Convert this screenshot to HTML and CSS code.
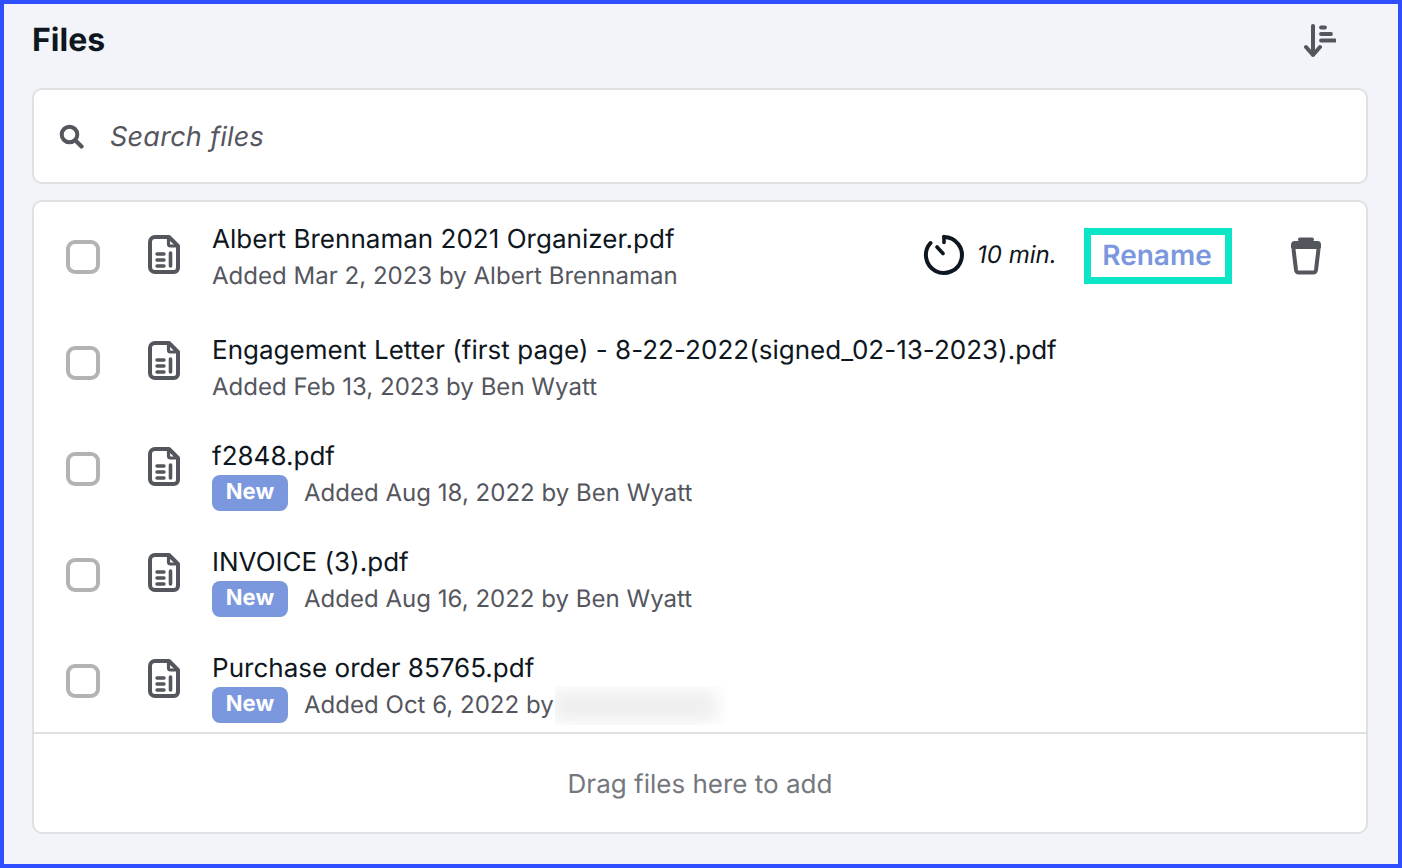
FILE: index.html
```html
<!DOCTYPE html>
<html lang="en">
<head>
<meta charset="utf-8">
<title>Files</title>
<link rel="stylesheet" href="styles.css">
</head>
<body>
<svg class="defs" width="0" height="0" aria-hidden="true">
  <symbol id="file" viewBox="0 0 32 39">
    <path d="M7 2h14l9 9v22a4 4 0 0 1-4 4H7a5 5 0 0 1-5-5V7a5 5 0 0 1 5-5z" fill="none" stroke="#54565e" stroke-width="4" stroke-linejoin="round"/>
    <path d="M20.500 2v7a2 2 0 0 0 2 2H30" fill="none" stroke="#54565e" stroke-width="3.200"/>
    <path d="M9 19h7M9 25h7M9 31h7" stroke="#54565e" stroke-width="3.4" stroke-linecap="round"/>
    <path d="M22.500 18v13" stroke="#54565e" stroke-width="3.600" stroke-linecap="round"/>
  </symbol>
</svg>
<main class="panel">
  <header class="head">
    <h1 class="title">Files</h1>
    <svg class="sort" width="32" height="34" viewBox="0 0 32 34" aria-label="Sort">
      <path d="M9 2v29M2 23l7 8 7-8" fill="none" stroke="#54565e" stroke-width="4" stroke-linecap="round" stroke-linejoin="round"/>
      <path d="M18 3.500h4M18 10h10M18 16.500h14" fill="none" stroke="#54565e" stroke-width="3.800" stroke-linecap="round" transform="translate(-1 0)"/>
    </svg>
  </header>
  <div class="search">
    <svg class="search-icon" width="25" height="25" viewBox="0 0 25 25" aria-hidden="true">
      <circle cx="10.500" cy="10.500" r="7.800" fill="none" stroke="#54565e" stroke-width="4"/>
      <path d="M16.500 16.500l6 6" stroke="#54565e" stroke-width="4.200" stroke-linecap="round"/>
    </svg>
    <span class="search-text">Search files</span>
  </div>
  <section class="files">
    <div class="list">
      <div class="row">
        <span class="check"></span>
        <svg class="file-icon"><use href="#file"/></svg>
        <div class="info info-top">
          <div class="name">Albert Brennaman 2021 Organizer.pdf</div>
          <div class="meta">Added Mar 2, 2023 by Albert Brennaman</div>
        </div>
        <svg class="timer" width="42" height="42" viewBox="0 0 42 42" aria-hidden="true">
          <path d="M21 3a18 18 0 1 1-13.500 6" fill="none" stroke="#0e1620" stroke-width="4" stroke-linecap="round"/>
          <path d="M21 2.500v6M14 13l6 6.500" fill="none" stroke="#0e1620" stroke-width="3.600" stroke-linecap="round"/>
        </svg>
        <span class="time">10 min.</span>
        <span class="rename">Rename</span>
        <svg class="trash" width="34" height="38" viewBox="0 0 34 38" aria-label="Delete">
          <path d="M4.500 12l2.500 21a3 3 0 0 0 3 2.500h14a3 3 0 0 0 3-2.500l2.500-21" fill="none" stroke="#54565e" stroke-width="4" stroke-linejoin="round"/>
          <path d="M3.500 10.500v-3a2 2 0 0 1 2-2h23a2 2 0 0 1 2 2v3z" fill="#54565e" stroke="#54565e" stroke-width="3" stroke-linejoin="round"/>
          <path d="M11 2.500h12" stroke="#54565e" stroke-width="4" stroke-linecap="round"/>
        </svg>
      </div>
      <div class="row">
        <span class="check"></span>
        <svg class="file-icon"><use href="#file"/></svg>
        <div class="info">
          <div class="name">Engagement Letter (first page) - 8-22-2022(signed_02-13-2023).pdf</div>
          <div class="meta">Added Feb 13, 2023 by Ben Wyatt</div>
        </div>
      </div>
      <div class="row">
        <span class="check"></span>
        <svg class="file-icon"><use href="#file"/></svg>
        <div class="info">
          <div class="name">f2848.pdf</div>
          <div class="meta"><span class="badge">New</span>Added Aug 18, 2022 by Ben Wyatt</div>
        </div>
      </div>
      <div class="row">
        <span class="check"></span>
        <svg class="file-icon"><use href="#file"/></svg>
        <div class="info">
          <div class="name">INVOICE (3).pdf</div>
          <div class="meta"><span class="badge">New</span>Added Aug 16, 2022 by Ben Wyatt</div>
        </div>
      </div>
      <div class="row">
        <span class="check"></span>
        <svg class="file-icon"><use href="#file"/></svg>
        <div class="info">
          <div class="name">Purchase order 85765.pdf</div>
          <div class="meta"><span class="badge">New</span>Added Oct 6, 2022 by<span class="redact"><span class="redact-fill"></span></span></div>
        </div>
      </div>
    </div>
    <footer class="drop">Drag files here to add</footer>
  </section>
</main>
</body>
</html>
```

FILE: styles.css
```css
* { box-sizing: border-box; }
html, body { margin: 0; height: 100%; }
body {
  font-family: Inter, "Liberation Sans", sans-serif;
  color: #0e1620;
  background: #f3f4f9;
  text-rendering: geometricPrecision;
}
.defs { display: block; height: 0; }
.panel {
  width: 1402px;
  height: 868px;
  border: 4px solid #2f4fff;
  padding: 0 30px 30px 28px;
  display: flex;
  flex-direction: column;
  overflow: hidden;
}
.head {
  height: 84px;
  flex: none;
  display: flex;
  align-items: center;
  justify-content: space-between;
  padding: 0 32px 10px 0;
}
.title { margin: -2px 0 0; font-size: 32px; font-weight: 700; line-height: 40px; }
.search {
  height: 96px;
  flex: none;
  display: flex;
  align-items: center;
  padding-left: 25px;
  background: #fff;
  border: 2px solid #dfe0e2;
  border-radius: 10px;
}
.search-icon { margin-right: 26px; }
.search-text { font-size: 27px; font-style: italic; color: #54565e; letter-spacing: 0.25px; }
.files {
  margin-top: 16px;
  height: 634px;
  flex: none;
  display: flex;
  flex-direction: column;
  background: #fff;
  border: 2px solid #dfe0e2;
  border-radius: 10px;
  overflow: hidden;
}
.list { height: 530px; flex: none; overflow: hidden; }
.row {
  height: 106px;
  display: flex;
  align-items: center;
  padding: 0 43px 0 32px;
}
.check {
  width: 34px;
  height: 34px;
  flex: none;
  margin-top: 4px;
  border: 4px solid #b3b3b3;
  border-radius: 9px;
  background: #fff;
}
.file-icon { width: 32px; height: 39px; flex: none; margin: -2px 32px 0 48px; }
.info { flex: 1; min-width: 0; padding-top: 17px; }
.info-top { padding-top: 0; margin-top: 6px; }
.name { font-size: 26px; line-height: 36px; white-space: nowrap; letter-spacing: 0.02px; }
.meta {
  margin-top: -1px;
  font-size: 24px;
  line-height: 38px;
  color: #54565e;
  white-space: nowrap;
  letter-spacing: 0.02px;
  display: flex;
  align-items: center;
}
.badge {
  width: 76px;
  height: 36px;
  margin-right: 16px;
  border-radius: 8px;
  background: #7b97dd;
  color: #fff;
  font-size: 22px;
  font-weight: 700;
  line-height: 34px;
  text-align: center;
}
.redact {
  width: 172px;
  height: 39px;
  margin-left: 1px;
  overflow: hidden;
  flex: none;
  background: #fff;
}
.redact-fill {
  display: block;
  width: 166px;
  height: 30px;
  margin: 5px 0 0 -4px;
  background: #eeeeef;
  filter: blur(9px);
}
.timer { flex: none; margin-right: 12px; }
.time { font-size: 24px; font-style: italic; width: 79px; flex: none; margin-top: -2px; white-space: nowrap; }
.rename {
  width: 148px;
  height: 56px;
  flex: none;
  margin: 2px 0 0 28px;
  padding-right: 2px;
  border: 7px solid #0ce6c6;
  color: #7b97dd;
  font-size: 28px;
  font-weight: 600;
  line-height: 40px;
  text-align: center;
}
.trash { flex: none; margin: 0 0 -2px 57px; }
.drop {
  flex: 1;
  padding-top: 2px;
  border-top: 2px solid #dfe0e2;
  display: flex;
  align-items: center;
  justify-content: center;
  font-size: 26px;
  color: #74777d;
}
```
